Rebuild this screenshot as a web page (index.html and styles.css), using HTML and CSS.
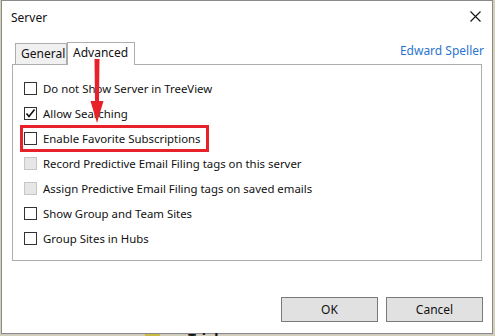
FILE: index.html
```html
<!DOCTYPE html>
<html lang="en">

<head>
    <meta charset="UTF-8" />
    <title>Server</title>
    <link rel="stylesheet" href="styles.css">
</head>

<body>
    <div class="desktop">
        <div class="window">
            <div class="titlebar">
                <span class="title">Server</span>
                <svg class="close" width="11" height="11" viewBox="0 0 11 11">
                    <path d="M0.5 0.5 L10.5 10.5 M10.5 0.5 L0.5 10.5" stroke="#111" stroke-width="1.1" fill="none" />
                </svg>
            </div>

            <div class="tabstrip">
                <div class="tab">General</div>
                <div class="tab active">Advanced</div>
                <a class="user" href="#">Edward Speller</a>
            </div>

            <div class="panel">
                <ul class="options">
                    <li><span class="check"></span>Do not Show Server in TreeView</li>
                    <li><span class="check">
                            <svg width="11" height="11" viewBox="0 0 11 11">
                                <path d="M1.5 5.5 L4 8.5 L9.5 1.5" stroke="#111" stroke-width="1.6" fill="none" />
                            </svg>
                        </span>Allow Searching</li>
                    <li><span class="check"></span>Enable Favorite Subscriptions</li>
                    <li class="disabled"><span class="check"></span>Record Predictive Email Filing tags on this server</li>
                    <li class="disabled"><span class="check"></span>Assign Predictive Email Filing tags on saved emails</li>
                    <li><span class="check"></span>Show Group and Team Sites</li>
                    <li><span class="check"></span>Group Sites in Hubs</li>
                </ul>
                <!-- annotation -->
                <div class="highlight"></div>
            </div>

            <svg class="arrow" width="16" height="64" viewBox="0 0 16 64">
                <polygon points="5.5,0 10.5,0 10,42 14.5,42 8,64 1.5,42 6,42" fill="#e8202a" />
            </svg>

            <div class="buttons">
                <button>OK</button>
                <button>Cancel</button>
            </div>
        </div>
        <div class="behind">
            <span class="mark"></span>
            <span class="trial">Trial</span>
        </div>
    </div>
</body>

</html>
```

FILE: styles.css
```css
body {
    margin: 0;
    background-color: #d5d1b4;
    font-family: "Noto Sans", "Open Sans", sans-serif;
    font-size: 11.4px;
    color: #111;
}

.desktop {
    width: 495px;
    height: 336px;
    overflow: hidden;
}

.window {
    position: relative;
    box-sizing: border-box;
    margin-left: 1px;
    width: 492px;
    height: 334px;
    background-color: #fff;
    border: 1px solid #8a8a8a;
    box-shadow: 0 1px 0 #c9c9c9;
}

.titlebar {
    display: flex;
    align-items: center;
    height: 31px;
    padding-left: 9px;
    padding-right: 8px;
    font-size: 12px;
}

.title {
    flex: 1;
    padding-top: 1px;
}

.close {
    margin-right: 3px;
}

.tabstrip {
    display: flex;
    align-items: flex-end;
    height: 22px;
    margin-top: 10px;
    margin-left: 12px;
    width: 470px;
    font-size: 12px;
}

.tab {
    box-sizing: border-box;
    height: 21px;
    padding: 0 5px;
    line-height: 20px;
    background-color: #f0f0f0;
    border: 1px solid #adadad;
    border-bottom: none;
}

.tab:first-child {
    margin-left: 1px;
    width: 52px;
}

.tab.active {
    height: 23px;
    margin-bottom: -1px;
    width: 68px;
    background-color: #fff;
    position: relative;
    z-index: 1;
}

.user {
    margin-left: auto;
    margin-bottom: 5px;
    color: #2a75d0;
    text-decoration: none;
    font-size: 12px;
}

.panel {
    position: relative;
    box-sizing: border-box;
    margin-left: 10px;
    width: 470px;
    height: 197px;
    border: 1px solid #adadad;
}

.options {
    list-style: none;
    margin: 0;
    padding: 11px 0 0 11px;
}

.options li {
    display: flex;
    align-items: center;
    height: 25px;
}

.check {
    box-sizing: border-box;
    display: flex;
    align-items: center;
    justify-content: center;
    width: 13px;
    height: 13px;
    margin-right: 6px;
    border: 1px solid #333;
    background-color: #fff;
}

.disabled .check {
    border-color: #c6c6c6;
    background-color: #e6e6e6;
}

.highlight {
    position: absolute;
    left: 7px;
    top: 60px;
    width: 189px;
    height: 27px;
    box-sizing: border-box;
    border: 3px solid #e8202a;
}

.arrow {
    position: absolute;
    left: 87px;
    top: 58px;
    z-index: 2;
}

.buttons {
    display: flex;
    justify-content: flex-end;
    gap: 8px;
    margin-top: 36px;
    width: 481px;
}

.buttons button {
    width: 97px;
    height: 25px;
    font-family: inherit;
    font-size: 12px;
    color: #111;
    background-color: #e1e1e1;
    border: 1px solid #7a7a7a;
}

.behind {
    position: relative;
    height: 2px;
}

.mark {
    position: absolute;
    left: 145px;
    top: 0;
    width: 15px;
    height: 2px;
    background-color: #c8ba45;
}

.trial {
    position: absolute;
    left: 188px;
    top: -2px;
    font-weight: bold;
    font-size: 14px;
    line-height: 14px;
}
```
